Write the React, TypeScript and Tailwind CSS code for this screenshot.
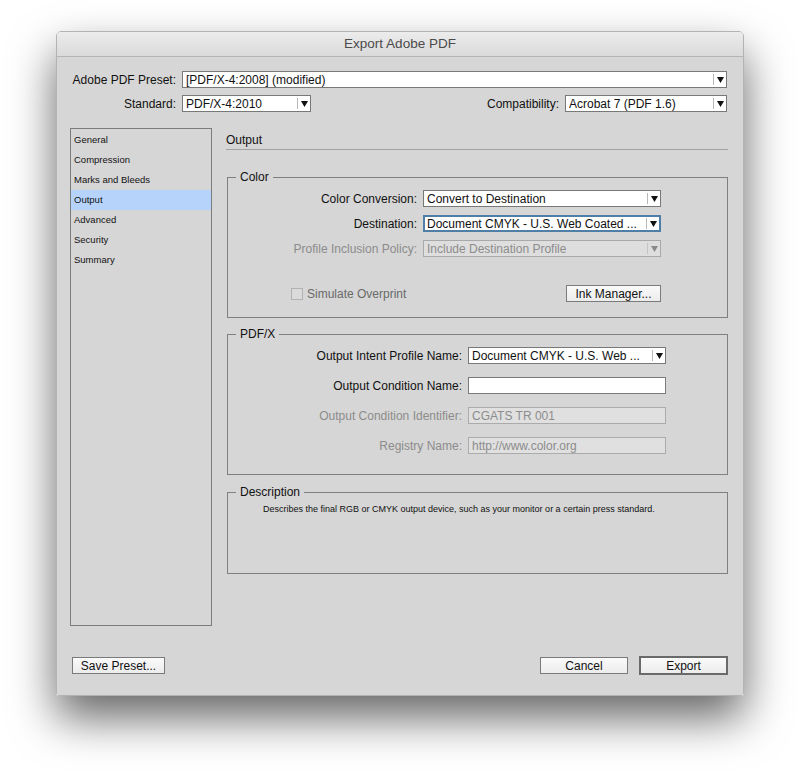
import React from "react";

function Arrow({ disabled }: { disabled?: boolean }) {
  return (
    <div className="flex h-full items-center">
      <div className={`h-[11px] w-px ${disabled ? "bg-[#c4c4c4]" : "bg-[#b8b8b8]"}`} />
      <div className="flex w-[12px] items-center justify-center">
        <svg width="7" height="6" viewBox="0 0 7 6">
          <polygon points="0,0 7,0 3.5,6" fill={disabled ? "#8a8a8a" : "#111"} />
        </svg>
      </div>
    </div>
  );
}

function Select({
  value,
  className,
  focused,
  disabled,
}: {
  value: string;
  className: string;
  focused?: boolean;
  disabled?: boolean;
}) {
  const box = focused
    ? "border-2 border-[#4f7ea6] bg-white pl-[2px]"
    : disabled
    ? "border border-[#a9a9a9] bg-[#dedede] pl-[3px]"
    : "border border-[#787878] bg-white pl-[3px]";
  return (
    <div className={`flex h-[17px] items-center ${box} ${className}`}>
      <div
        className={`flex-1 truncate whitespace-nowrap text-[12px] leading-[14px] ${
          disabled ? "text-[#8c8c8c]" : "text-[#111]"
        }`}
      >
        {value}
      </div>
      <Arrow disabled={disabled} />
    </div>
  );
}

function TextField({ value, disabled }: { value?: string; disabled?: boolean }) {
  return (
    <div
      className={`flex h-[17px] w-[198px] items-center pl-[3px] text-[12px] leading-[14px] ${
        disabled
          ? "border border-[#ababab] bg-[#e0e0e0] text-[#8c8c8c]"
          : "border border-[#7a7a7a] bg-white text-[#111]"
      }`}
    >
      {value}
    </div>
  );
}

function Button({ label, className, primary }: { label: string; className: string; primary?: boolean }) {
  return (
    <div
      className={`flex items-center justify-center bg-gradient-to-b from-[#fafafa] to-[#ececec] text-[12px] leading-[14px] text-[#111] ${
        primary ? "h-[19px] border-2 border-[#6a6a6a]" : "h-[17px] border border-[#7a7a7a]"
      } ${className}`}
    >
      {label}
    </div>
  );
}

function Label({ text, className, disabled }: { text: string; className: string; disabled?: boolean }) {
  return (
    <div
      className={`text-right text-[12px] leading-[14px] ${disabled ? "text-[#8c8c8c]" : "text-[#111]"} ${className}`}
    >
      {text}
    </div>
  );
}

const items = ["General", "Compression", "Marks and Bleeds", "Output", "Advanced", "Security", "Summary"];

export default function App() {
  return (
    <div className="h-[776px] w-[800px] bg-white pl-[56px] pt-[31px] font-['Liberation_Sans',Arial,sans-serif]">
      <div className="flex h-[665px] w-[688px] flex-col overflow-hidden rounded-t-[5px] rounded-b-[3px] border border-[#b3b3b3] shadow-[0_22px_45px_rgba(0,0,0,0.6)]">
        <div className="flex h-[25px] items-center justify-center border-b border-[#b4b4b4] bg-gradient-to-b from-[#ececec] to-[#dadada] text-[13.5px] leading-[16px] text-[#4b4b4b]">
          Export Adobe PDF
        </div>
        <div className="flex flex-1 flex-col bg-[#d6d6d6] pl-[13px] pr-[15px] pt-[14px]">
          <div className="flex items-center pr-px">
            <Label text="Adobe PDF Preset:" className="w-[106px]" />
            <Select value="[PDF/X-4:2008] (modified)" className="ml-[6px] flex-1" />
          </div>
          <div className="mt-[7px] flex items-center pr-px">
            <Label text="Standard:" className="w-[106px]" />
            <Select value="PDF/X-4:2010" className="ml-[6px] w-[129px]" />
            <div className="flex-1" />
            <Label text="Compatibility:" className="" />
            <Select value="Acrobat 7 (PDF 1.6)" className="ml-[6px] w-[162px]" />
          </div>

          <div className="mt-[16px] flex h-[498px]">
            <div className="w-[142px] border border-[#7c7c7c] pt-px">
              {items.map((it) => (
                <div
                  key={it}
                  className={`flex h-[20px] items-center pl-[3px] text-[9.5px] leading-[12px] text-[#111] ${
                    it === "Output" ? "bg-[#b6d4fb]" : ""
                  }`}
                >
                  {it}
                </div>
              ))}
            </div>

            <div className="ml-[14px] flex flex-1 flex-col">
              <div className="border-b border-[#a3a3a3] pb-[2px] pt-[5px] text-[12px] leading-[14px] text-[#111]">
                Output
              </div>

              <fieldset className="ml-px mt-[20px] border border-[#7f7f7f] pb-[15px] pt-[6px]">
                <legend className="ml-[8px] px-[4px] text-[12px] leading-[14px] text-[#111]">Color</legend>
                <div className="flex items-center">
                  <Label text="Color Conversion:" className="w-[189px]" />
                  <Select value="Convert to Destination" className="ml-[6px] w-[238px]" />
                </div>
                <div className="mt-[8px] flex items-center">
                  <Label text="Destination:" className="w-[189px]" />
                  <Select value="Document CMYK - U.S. Web Coated ..." className="ml-[6px] w-[238px]" focused />
                </div>
                <div className="mt-[8px] flex items-center">
                  <Label text="Profile Inclusion Policy:" className="w-[189px]" disabled />
                  <Select value="Include Destination Profile" className="ml-[6px] w-[238px]" disabled />
                </div>
                <div className="mt-[28px] flex items-center pl-[63px] pr-[66px]">
                  <div className="h-[12px] w-[12px] border border-[#b2b2b2] bg-[#dadada]" />
                  <div className="ml-[4px] text-[12px] leading-[14px] text-[#6a6a6a]">Simulate Overprint</div>
                  <div className="flex-1" />
                  <Button label="Ink Manager..." className="w-[95px]" />
                </div>
              </fieldset>

              <fieldset className="ml-px mt-[9px] border border-[#7f7f7f] pb-[20px] pt-[6px]">
                <legend className="ml-[8px] px-[4px] text-[12px] leading-[14px] text-[#111]">PDF/X</legend>
                <div className="flex items-center">
                  <Label text="Output Intent Profile Name:" className="w-[234px]" />
                  <Select value="Document CMYK - U.S. Web ..." className="ml-[6px] w-[198px]" />
                </div>
                <div className="mt-[13px] flex items-center">
                  <Label text="Output Condition Name:" className="w-[234px]" />
                  <div className="ml-[6px]">
                    <TextField />
                  </div>
                </div>
                <div className="mt-[13px] flex items-center">
                  <Label text="Output Condition Identifier:" className="w-[234px]" disabled />
                  <div className="ml-[6px]">
                    <TextField value="CGATS TR 001" disabled />
                  </div>
                </div>
                <div className="mt-[13px] flex items-center">
                  <Label text="Registry Name:" className="w-[234px]" disabled />
                  <div className="ml-[6px]">
                    <TextField value="http://www.color.org" disabled />
                  </div>
                </div>
              </fieldset>

              <fieldset className="ml-px mt-[10px] h-[89px] border border-[#7f7f7f] pt-[4px]">
                <legend className="ml-[8px] px-[4px] text-[12px] leading-[14px] text-[#111]">Description</legend>
                <div className="pl-[35px] text-[9px] leading-[12px] text-[#111]">
                  Describes the final RGB or CMYK output device, such as your monitor or a certain press standard.
                </div>
              </fieldset>
            </div>
          </div>

          <div className="mt-[30px] flex items-center">
            <Button label="Save Preset..." className="ml-[2px] w-[93px]" />
            <div className="flex-1" />
            <Button label="Cancel" className="w-[88px]" />
            <Button label="Export" className="ml-[11px] w-[89px]" primary />
          </div>
        </div>
      </div>
    </div>
  );
}
